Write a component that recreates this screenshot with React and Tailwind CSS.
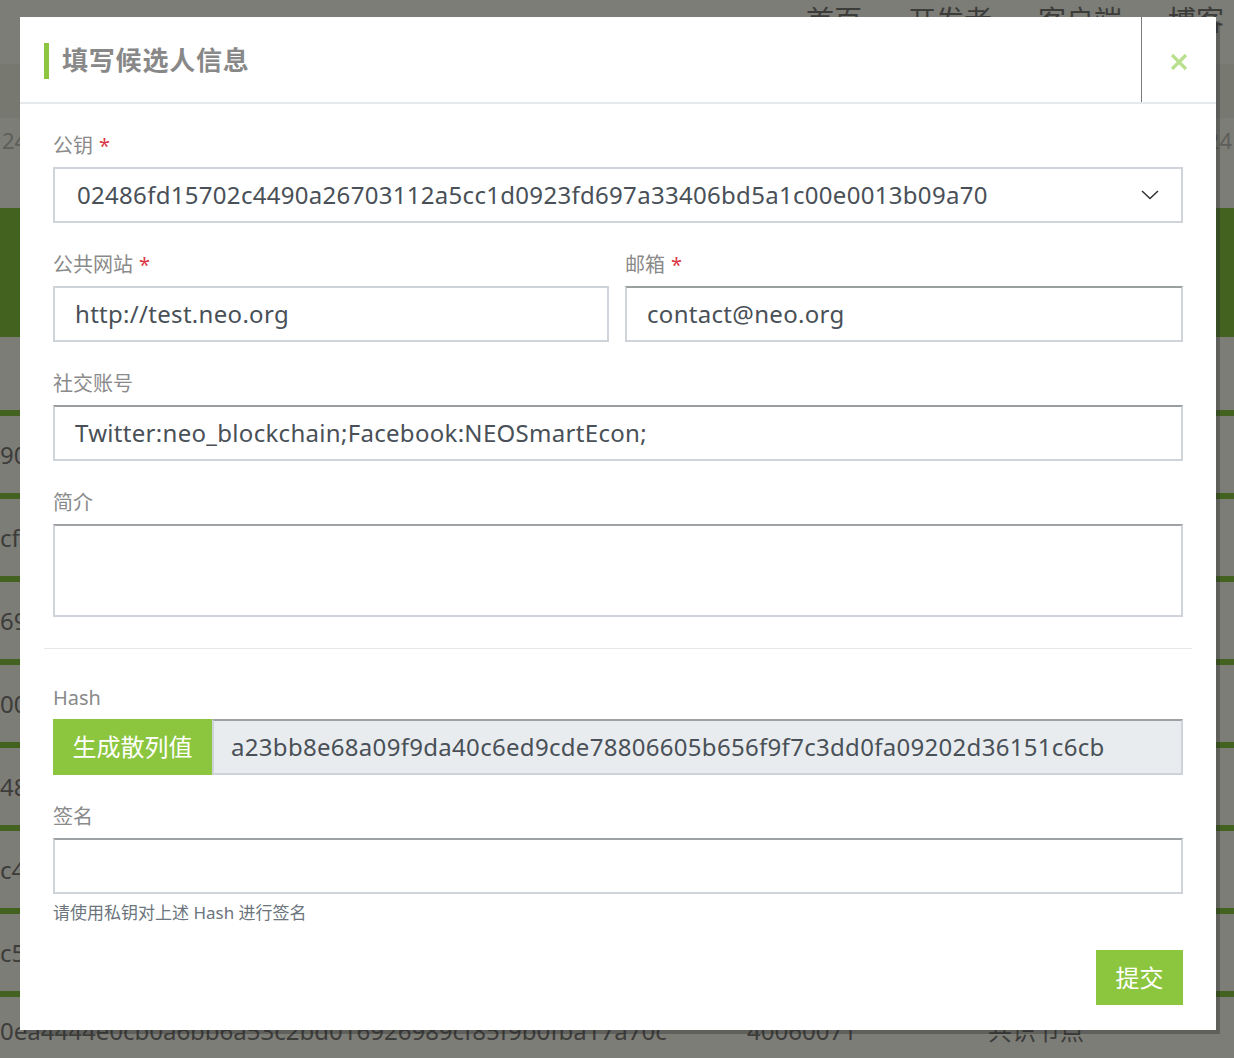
import React from "react";

const font = { fontFamily: '"Noto Sans", "Noto Sans CJK SC", sans-serif' };

const Label = ({ children, required }) => (
  <label className="block h-[28px] pt-[3px] text-[20px] leading-[25px] text-[#8a8a8a] mb-[9px]">
    {children}
    {required && <span className="text-[#dc3545] ml-[6px]">*</span>}
  </label>
);

const Input = ({ value, className = "" }) => (
  <div
    className={`h-[56px] border-2 border-[#ced4da] bg-white flex items-center px-[20px] text-[24px] tracking-[0.3px] text-[#495057] ${className}`}
  >
    {value}
  </div>
);

const rows = ["90a", "cf1", "69", "00", "48", "c4", "c5"];

const Backdrop = () => (
  <div className="absolute inset-0 bg-[#7d7d77] overflow-hidden text-[#3c3c3a]">
    <div className="h-[64px] flex justify-end gap-[46px] pr-[10px] text-[28px] leading-[36px] pt-[2px]">
      <span>首页</span>
      <span>开发者</span>
      <span>客户端</span>
      <span>博客</span>
    </div>
    <div className="h-[54px] bg-[#777971]" />
    <div className="h-[90px] flex justify-between items-start text-[22px] text-[#5e5e5a] pt-[6px] px-[2px]">
      <span>24</span>
      <span>24</span>
    </div>
    <div className="h-[129px] bg-[#43621f]" />
    <div className="h-[73px]" />
    {rows.map((r) => (
      <div key={r} className="h-[83px] border-t-[6px] border-[#43621f] flex items-center text-[24px]">
        <span>{r}</span>
      </div>
    ))}
    <div className="h-[83px] border-t-[6px] border-[#43621f] flex items-center text-[24px] relative">
      <span className="absolute left-0 top-[16px]">0ea4444e0cb0a6bb6a53c2bd016926989cf85f9b0fba17a70c</span>
      <span className="absolute left-[747px] top-[16px]">40060071</span>
      <span className="absolute left-[988px] top-[16px]">共识节点</span>
    </div>
  </div>
);

export default function App() {
  return (
    <div className="relative w-[1234px] h-[1058px] overflow-hidden" style={font}>
      <Backdrop />
      <div className="absolute left-[20px] top-[17px] w-[1196px] h-[1013px] bg-white shadow-[4px_4px_0_rgba(40,40,40,0.35)]">
        <div className="h-[87px] border-b-2 border-[#e6e9ec] flex">
          <div className="flex-1 flex items-center pl-[24px] pt-[2px]">
            <span className="w-[5px] h-[36px] bg-[#8cc63f] mr-[13px]" />
            <h1 className="text-[26px] font-bold text-[#888888] tracking-[0.8px]">填写候选人信息</h1>
          </div>
          <div className="w-[75px] border-l border-[#7a7a7a] flex items-center justify-center pt-[4px]">
            <svg width="20" height="20" viewBox="0 0 20 20">
              <path d="M3 3 L17 17 M17 3 L3 17" stroke="#b9e08f" strokeWidth="3.2" />
            </svg>
          </div>
        </div>

        <div className="px-[33px] pt-[26px] pb-[25px]">
          <div className="mb-[26px]">
            <Label required>公钥</Label>
            <Input
              className="justify-between pl-[22px] pr-[22px]"
              value={
                <>
                  <span>02486fd15702c4490a26703112a5cc1d0923fd697a33406bd5a1c00e0013b09a70</span>
                  <svg width="18" height="10" viewBox="0 0 18 10">
                    <path d="M1 1 L9 8.5 L17 1" stroke="#333" strokeWidth="1.5" fill="none" />
                  </svg>
                </>
              }
            />
          </div>

          <div className="grid grid-cols-2 gap-x-[18px] mb-[26px]">
            <div>
              <Label required>公共网站</Label>
              <Input value="http://test.neo.org" />
            </div>
            <div className="-ml-[2px]">
              <Label required>邮箱</Label>
              <Input value="contact@neo.org" className="border-t-[#9aa09f]" />
            </div>
          </div>

          <div className="mb-[26px]">
            <Label>社交账号</Label>
            <Input value="Twitter:neo_blockchain;Facebook:NEOSmartEcon;" className="border-t-[#9a9d9f] text-[#5c636a]" />
          </div>

          <div className="mb-[31px]">
            <Label>简介</Label>
            <div className="h-[93px] border-2 border-[#ced4da] border-t-[#a0a3a5]" />
          </div>

          <hr className="-mx-[9px] border-t border-[#e6e8ea] mb-[33px]" />

          <div className="mb-[26px]">
            <Label>Hash</Label>
            <div className="flex h-[56px]">
              <button className="w-[159px] h-full bg-[#8cc63f] text-white text-[24px]">生成散列值</button>
              <div className="flex-1 border-2 border-[#ced4da] border-t-[#9ea1a3] bg-[#e9ecef] flex items-center pl-[17px] text-[24px] tracking-[0.3px] text-[#495057]">
                a23bb8e68a09f9da40c6ed9cde78806605b656f9f7c3dd0fa09202d36151c6cb
              </div>
            </div>
          </div>

          <div>
            <Label>签名</Label>
            <div className="h-[56px] border-2 border-[#ced4da] border-t-[#9ea1a3]" />
            <p className="mt-[8px] text-[17px] leading-[22px] text-[#6c757d]">请使用私钥对上述 Hash 进行签名</p>
          </div>

          <div className="flex justify-end mt-[26px]">
            <button className="w-[87px] h-[55px] bg-[#8cc63f] text-white text-[24px]">提交</button>
          </div>
        </div>
      </div>
    </div>
  );
}
